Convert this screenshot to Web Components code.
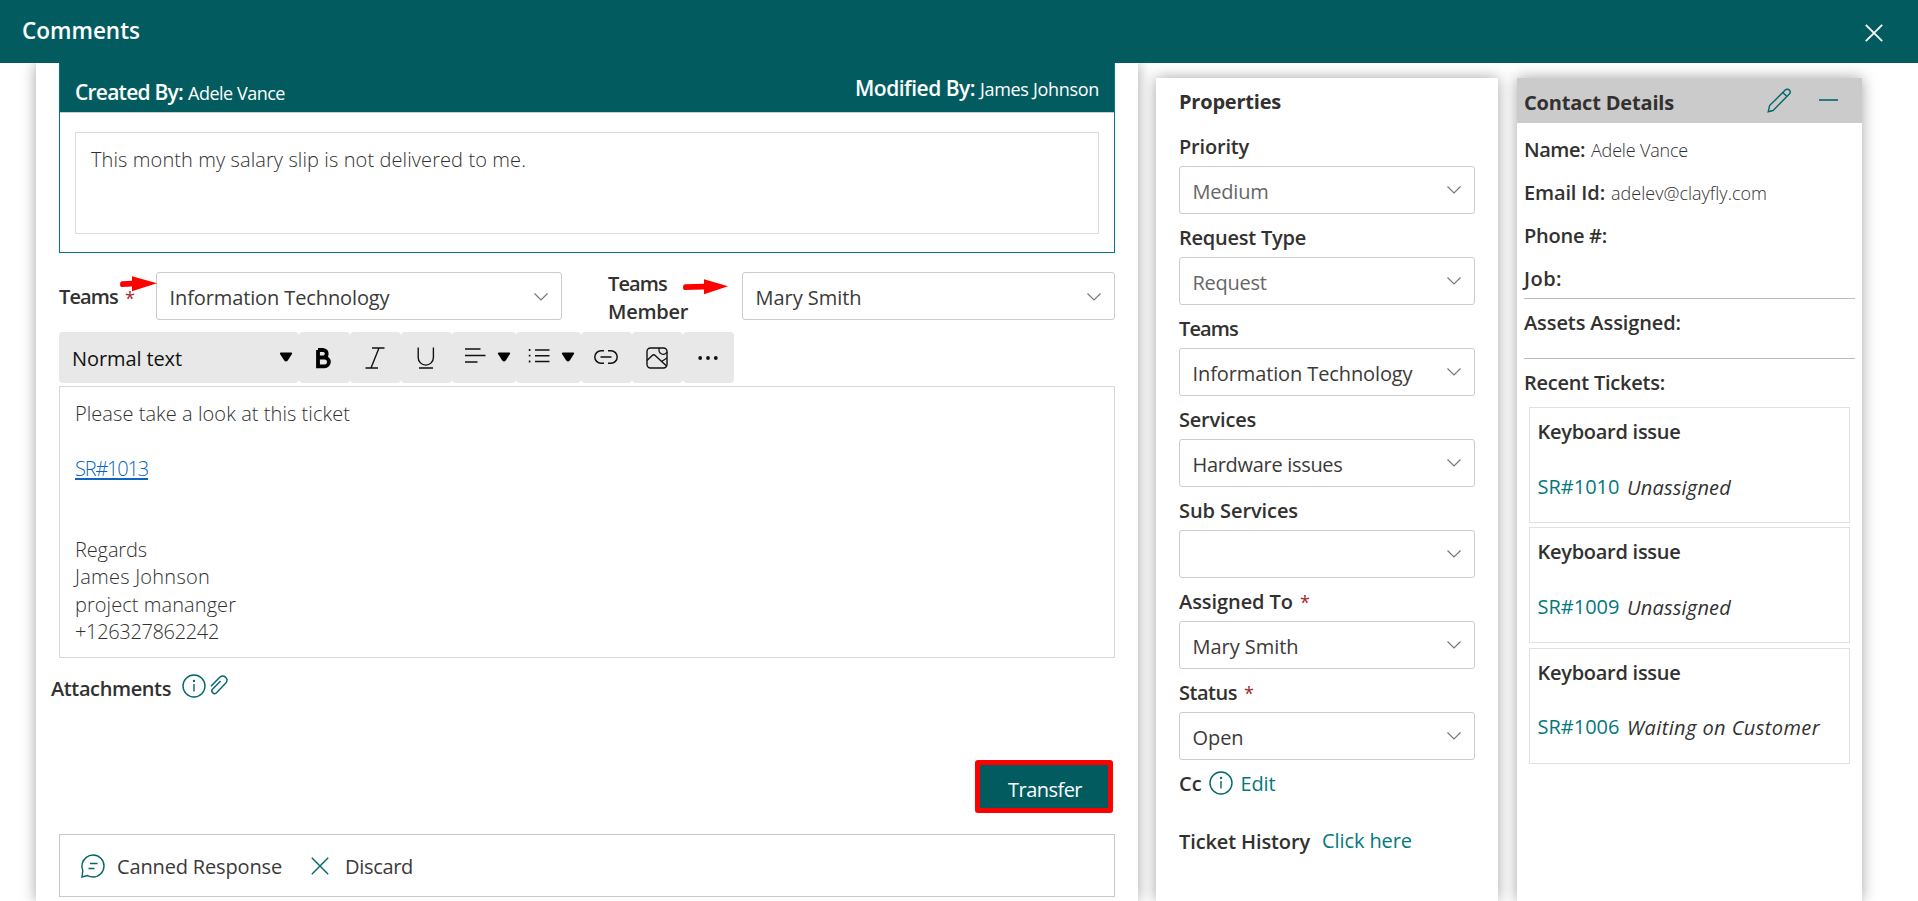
<!DOCTYPE html>
<html lang="en">
<head>
<meta charset="utf-8">
<title>Comments</title>
<style>
html,body{margin:0;height:100%;overflow:hidden;background:#fff}
body{font-family:"Open Sans","Noto Sans",sans-serif;font-size:20px;color:#323130}
</style>
</head>
<body>
<ticket-app></ticket-app>
<script>
const define=(name,html,setup)=>customElements.define(name,class extends HTMLElement{
  connectedCallback(){
    if(this.shadowRoot)return;
    const t=document.createElement('template');
    t.innerHTML=typeof html==='function'?html(this):html;
    this.attachShadow({mode:'open'}).appendChild(t.content.cloneNode(true));
    if(setup)setup(this);
  }
});

/* Text run tracked to a given advance width. */
define('ui-text',`<style>:host{display:inline-block;white-space:nowrap;flex:none}span{display:inline-block}</style><span><slot></slot></span>`,el=>{
  const w=+el.getAttribute('w');
  if(!w)return;
  const s=el.shadowRoot.querySelector('span');
  const natural=s.getBoundingClientRect().width;
  s.style.letterSpacing=((w-natural)/el.textContent.length).toFixed(4)+'px';
  el.style.width=w+'px';
});

const icons={
  close:['0 0 18 18','<path d="M.8 .8 17.2 17.2M17.2 .8 .8 17.2"/>'],
  chevron:['0 0 14 8','<path d="M.5 .5 7 7 13.500 .5"/>'],
  pencil:['0 0 24 25','<path d="M1.200 23.800 2.600 17.600 18 2.200C19.300 .9 21.200 .9 22.300 2 23.400 3.100 23.400 5 22.100 6.300L7.600 21 6 22.500ZM15.800 4.400 19.900 8.500"/>'],
  minus:['0 0 19 2','<path d="M0 1H19"/>'],
  info:['0 0 24 24','<circle cx="12" cy="12" r="11"/><path d="M12 10V17.500"/><circle cx="12" cy="7" r=".5"/>'],
  clip:['0 0 18 20','<path d="M1 11.200 9.200 2.800C11 .9 13.600 .6 15.400 2.100 17.200 3.700 17.400 6.200 15.800 8L6.800 17.600C5.700 18.800 4 18.900 2.800 17.900 1.600 16.800 1.600 15.100 2.700 13.900L10.600 6"/>'],
  chat:['0 0 24 24','<path d="M1 23 1.800 16.600C.7 14.600 .8 11.200 1.300 9.300 2.700 4.500 7 1 12 1 18.200 1 23 6 23 12S18.200 23 12 23C10 23 8 22.400 6.500 21.600ZM9 9.500H16.500M7.500 14.500H13.500"/>'],
  bold:['0 0 15 20','<path d="M2 2V18.300H8.500A4.400 4.400 0 0 0 8.500 9.500H2M2 2H7.500A3.800 3.800 0 0 1 7.500 9.500" stroke-width="3.800"/>'],
  italic:['0 0 20 22','<path d="M7 1H19.500M.5 21H13M14 1 6 21"/>'],
  underline:['0 0 18 22','<path d="M1.200 .5V10.500A7.600 7.600 0 0 0 16.400 10.500V.5M2 21H16"/>'],
  align:['0 0 22 15','<path d="M1 1H16.500M1 7.500H21.500M1 14H13.500"/>'],
  list:['0 0 22 15','<path d="M7 2H21.500M7 7.700H21.500M7 13.500H21.500"/><path d="M.8 2H2.400M.8 7.700H2.400M.8 13.500H2.400" stroke-width="1.800"/>'],
  down:['0 0 12 10','<path d="M.8 1.500H11.200L7 8Q6 9.300 5 8Z" fill="currentColor" stroke-linejoin="round" stroke-width="1.800"/>'],
  link:['0 0 24 14','<path d="M10 .8H7A6.200 6.200 0 0 0 7 13.200H10M14 .8H17A6.200 6.200 0 0 1 17 13.200H14M6.500 7H17.500" stroke-width="1.500"/>'],
  image:['0 0 22 22','<rect x="1" y="1" width="20" height="20" rx="3.500"/><path d="M13.500 1A3.700 3.700 0 1 0 21 5M1 13.500 6.200 8.400Q7.700 7 9.200 8.400L20.500 19M15.500 14.500 21 11"/>'],
  more:['0 0 20 4','<g fill="currentColor" stroke="none"><circle cx="2.200" cy="2" r="1.900"/><circle cx="10" cy="2" r="1.900"/><circle cx="17.800" cy="2" r="1.900"/></g>']
};
define('ui-icon',el=>{
  const [vb,body]=icons[el.getAttribute('name')];
  const [,,w,h]=vb.split(' ');
  return `<style>:host{display:block;flex:none;width:${w}px;height:${h}px}svg{display:block;overflow:visible}</style>
  <svg width="${w}" height="${h}" viewBox="${vb}" fill="none" stroke="currentColor" stroke-width="${el.getAttribute('sw')||1.4}">${body}</svg>`;
});

/* Red pointer drawn over the form. */
define('red-arrow',el=>{
  const head=+el.getAttribute('head'),len=+el.getAttribute('len');
  return `<style>:host{position:absolute;display:block}svg{display:block}</style>
  <svg width="${len}" height="16" viewBox="0 0 ${len} 16" fill="#f00"><path d="M2 5.300 ${head} 4.800V.3L${len} 7.200 ${head} 15.200V10.500L2 11Q0 11 0 8.200T2 5.300Z"/></svg>`;
});

define('drop-down',el=>`<style>
:host{display:flex;box-sizing:border-box;height:48px;border:1px solid #ccc;border-radius:3px;padding:2px 13px 0 12.500px;align-items:center;justify-content:space-between;background:#fff;color:#3b3a39}
ui-icon{color:#777;margin-top:-3px}
</style><slot></slot><ui-icon name="chevron" sw="1.2"></ui-icon>`);

define('form-field',el=>`<style>
:host{display:block;height:91px;color:#323130}
.label{display:flex;height:36px;line-height:34px;font-weight:600}
.star{color:#a4262c;font-weight:400;font-size:18px;margin-left:7px}
.dim{color:#666}
</style><div class="label"><ui-text w="${el.getAttribute('lw')}">${el.getAttribute('label')}</ui-text>${el.hasAttribute('required')?'<span class="star">*</span>':''}</div>
<drop-down class="${el.hasAttribute('dim')?'dim':''}"><ui-text w="${el.getAttribute('vw')||''}">${el.getAttribute('value')||''}</ui-text></drop-down>`);

define('app-header',`<style>
:host{display:flex;box-sizing:border-box;height:63px;padding:0 35px 0 22px;background:#025c5f;color:#fff;align-items:center;justify-content:space-between}
ui-text{font-size:22.500px;font-weight:600;line-height:30px;margin-top:-1px}
ui-icon{margin-top:2px}
</style><ui-text w="118">Comments</ui-text><ui-icon name="close" sw="1.8"></ui-icon>`);

define('message-card',`<style>
:host{display:block;box-sizing:border-box;height:190px;border:1px solid #03787c;border-top:0}
.head{display:flex;justify-content:space-between;box-sizing:border-box;height:50px;padding:14px 15px 0;background:#025c5f;border-bottom:1px solid #ccc;color:#fff;line-height:30px}
.who{display:flex;gap:5px;height:30px;align-items:baseline;font-size:18px}
.who b{font-weight:600;font-size:21px}
.right{margin-top:-4px}
.body{box-sizing:border-box;height:102px;margin:19px 15px 0;border:1px solid #dcdcdc;padding:12px 15px;line-height:30px;font-weight:300}
</style>
<div class="head"><div class="who"><b><ui-text w="108">Created By:</ui-text></b><ui-text w="97">Adele Vance</ui-text></div>
<div class="who right"><b><ui-text w="120">Modified By:</ui-text></b><ui-text w="119">James Johnson</ui-text></div></div>
<div class="body"><ui-text w="435">This month my salary slip is not delivered to me.</ui-text></div>`);

define('edit-toolbar',`<style>
:host{display:flex;width:675px;height:51px;color:#111}
div{display:flex;box-sizing:border-box;background:#e8e8e8;border-radius:4px;height:51px;align-items:center;justify-content:center;width:51px;padding-right:2px;padding-bottom:1px}
.style{width:240px;justify-content:space-between;padding:0 7px 0 13px;line-height:30px}
.style ui-text{margin-top:3px}
.pair{width:64px;gap:12px;padding-left:5px;padding-right:0;padding-bottom:5px}
.list{width:65px}
ui-icon[name=down]{color:#000;margin-top:0}
.style ui-icon{margin-bottom:2px}
.pair ui-icon[name=down]{margin-top:4px}
</style>
<div class="style"><ui-text w="110">Normal text</ui-text><ui-icon name="down"></ui-icon></div>
<div style="padding-bottom:0"><ui-icon name="bold" style="color:#000"></ui-icon></div><div style="padding-bottom:0"><ui-icon name="italic"></ui-icon></div><div style="padding-bottom:0"><ui-icon name="underline"></ui-icon></div>
<div class="pair"><ui-icon name="align"></ui-icon><ui-icon name="down"></ui-icon></div>
<div class="pair list"><ui-icon name="list"></ui-icon><ui-icon name="down"></ui-icon></div>
<div><ui-icon name="link"></ui-icon></div><div style="padding-bottom:0"><ui-icon name="image"></ui-icon></div><div style="padding-bottom:0"><ui-icon name="more"></ui-icon></div>`);

define('reply-editor',`<style>
:host{display:block;box-sizing:border-box;height:272px;border:1px solid #d8d8d8;padding:13px 15px;font-weight:300}
p{margin:0;height:27.330px;line-height:27.330px}
.a{margin-bottom:28px}
.b{margin-bottom:53.500px;color:#0563c1}
.b ui-text{border-bottom:2px solid #0a66c2;height:23px;line-height:27px}
</style>
<p class="a"><ui-text w="275">Please take a look at this ticket</ui-text></p>
<p class="b"><ui-text w="73">SR#1013</ui-text></p>
<p><ui-text w="72">Regards</ui-text></p><p><ui-text w="135">James Johnson</ui-text></p><p><ui-text w="161">project mananger</ui-text></p><p><ui-text w="144">+126327862242</ui-text></p>`);

define('comment-panel',`<style>
:host{display:block;box-sizing:border-box;width:1102px;padding:0 23px;background:#fff}
.assign{position:relative;display:flex;height:48px;margin:19px 0 12px;align-items:center;line-height:28px;font-weight:600}
.assign drop-down{font-weight:400;padding-top:4px}
.t1{width:97px;display:flex;gap:7px;padding-top:3px}
.star{color:#a4262c;font-weight:400;font-size:18px;margin-top:1px}
.t2{margin-left:46px;width:134px;display:flex;flex-direction:column;padding-top:4px}
reply-editor{margin-top:3px}
.attach{display:flex;gap:4px;height:28px;line-height:28px;margin:14px 0 0 -8px;font-weight:600;align-items:center;color:#323130}
.attach ui-icon{color:#03666a;margin-top:-1px}
.attach ui-icon[name=clip]{margin-top:-3px}
.attach ui-text{margin:5px 7px 0 0}
.act{display:flex;justify-content:flex-end;padding:60px 2px 0 0;height:54px}
button{all:unset;box-sizing:border-box;width:138px;height:53px;border:5px solid #f00;border-radius:3px;background:#025c5f;color:#fff;text-align:center;font-weight:500;line-height:49px;padding-left:2px}
.foot{display:flex;box-sizing:border-box;height:63px;margin-top:20px;border:1px solid #c8c8c8;padding:0 21px;align-items:center;color:#3b3a39;line-height:30px}
.foot ui-icon{color:#03666a}
.foot ui-text{margin:3px 0 0 12px}
</style>
<message-card></message-card>
<div class="assign"><div class="t1"><ui-text w="59">Teams</ui-text><span class="star">*</span></div>
<drop-down style="width:406px"><ui-text w="220">Information Technology</ui-text></drop-down>
<div class="t2"><ui-text w="59">Teams</ui-text><ui-text w="80">Member</ui-text></div>
<drop-down style="width:373px"><ui-text w="106">Mary Smith</ui-text></drop-down>
<red-arrow head="12" len="37" style="left:61px;top:4px"></red-arrow><red-arrow head="21" len="45" style="left:624px;top:7px"></red-arrow></div>
<edit-toolbar></edit-toolbar>
<reply-editor></reply-editor>
<div class="attach"><ui-text w="120">Attachments</ui-text><ui-icon name="info"></ui-icon><ui-icon name="clip"></ui-icon></div>
<div class="act"><button><ui-text w="74">Transfer</ui-text></button></div>
<div class="foot"><ui-icon name="chat"></ui-icon><ui-text w="165">Canned Response</ui-text><ui-icon name="close" style="margin-left:29px"></ui-icon><ui-text w="68" style="margin-left:16px">Discard</ui-text></div>`);

define('properties-panel',`<style>
:host{display:block;box-sizing:border-box;width:342px;margin-top:15px;padding:0 23px;background:#fff}
h2{margin:8px 0 13px;height:31px;line-height:32px;font-size:20px;font-weight:700}
.row{display:flex;line-height:30px;height:30px;font-weight:600;align-items:center}
a{color:#03787c;font-weight:400}
.row ui-icon{color:#03666a;margin:-3px 8px 0 6.500px}
</style>
<h2><ui-text w="102">Properties</ui-text></h2>
<form-field label="Priority" lw="70" value="Medium" vw="76" dim></form-field>
<form-field label="Request Type" lw="127" value="Request" vw="74" dim></form-field>
<form-field label="Teams" lw="59" value="Information Technology" vw="220"></form-field>
<form-field label="Services" lw="77" value="Hardware issues" vw="150"></form-field>
<form-field label="Sub Services" lw="119"></form-field>
<form-field label="Assigned To" lw="114" value="Mary Smith" vw="106" required></form-field>
<form-field label="Status" lw="58" value="Open" vw="51" required></form-field>
<div class="row" style="padding-top:2px"><ui-text w="23">Cc</ui-text><ui-icon name="info"></ui-icon><a><ui-text w="35">Edit</ui-text></a></div>
<div class="row" style="margin-top:28px"><ui-text w="131">Ticket History</ui-text><a style="margin:-2px 0 0 12px"><ui-text w="90">Click here</ui-text></a></div>`);

define('ticket-item',el=>`<style>
:host{display:block;box-sizing:border-box;height:116px;border:1px solid #e1e1e1;padding:9px 7.500px;margin-bottom:4.400px;line-height:30px}
.t{font-weight:600;margin-bottom:24.500px;height:30px}
.r{display:flex;gap:7.500px}
.r a{color:#03787c}.r i{margin-top:1px}
</style><div class="t"><ui-text w="143">Keyboard issue</ui-text></div><div class="r"><a><ui-text w="82">${el.getAttribute('num')}</ui-text></a><i><ui-text w="${el.getAttribute('sw')}">${el.getAttribute('status')}</ui-text></i></div>`);

define('contact-panel',`<style>
:host{display:block;width:345px;margin-top:15px;background:#fff}
.head{display:flex;box-sizing:border-box;height:45px;background:#cbcbcb;padding:0 24px 0 7px;align-items:center;font-weight:700;line-height:30px}
.head ui-icon{color:#03666a}
.head ui-text{margin-top:4px}
.rows{padding:12px 7px 0;font-weight:600}
.row{display:flex;gap:6px;height:43px;line-height:30px;padding-left:0;align-items:baseline;box-sizing:border-box}
.v{font-weight:300;font-size:18px}
.job{height:34px}
hr{border:0;border-top:1px solid #bbb;margin:0;height:0}
.assets{height:59px;padding-top:9px}
.recent{height:48px;padding-top:9px}
.list{padding:0 5px}
</style>
<div class="head"><ui-text w="150">Contact Details</ui-text><ui-icon name="pencil" style="margin-left:93px"></ui-icon><ui-icon name="minus" sw="1.6" style="margin:-1px 0 0 28px"></ui-icon></div>
<div class="rows">
<div class="row"><ui-text w="61">Name:</ui-text><ui-text class="v" w="97">Adele Vance</ui-text></div>
<div class="row"><ui-text w="81">Email Id:</ui-text><ui-text class="v" w="156">adelev@clayfly.com</ui-text></div>
<div class="row"><ui-text w="83">Phone #:</ui-text></div>
<div class="row job"><ui-text w="38">Job:</ui-text></div><hr>
<div class="row assets"><ui-text w="157">Assets Assigned:</ui-text></div><hr>
<div class="row recent"><ui-text w="141">Recent Tickets:</ui-text></div>
<div class="list" style="font-weight:400"><ticket-item num="SR#1010" status="Unassigned" sw="104"></ticket-item><ticket-item num="SR#1009" status="Unassigned" sw="104"></ticket-item><ticket-item num="SR#1006" status="Waiting on Customer" sw="193"></ticket-item></div>
</div>`);

define('ticket-app',`<style>
:host{display:flex;flex-direction:column;height:100vh}
main{flex:1;min-height:0;display:flex;overflow:hidden;padding-left:36px}
main>*{box-shadow:0 0 14px rgba(0,0,0,.36)}
properties-panel{margin-left:18px}
contact-panel{margin-left:19px}
</style><app-header></app-header><main><comment-panel></comment-panel><properties-panel></properties-panel><contact-panel></contact-panel></main>`);
</script>
</body>
</html>
